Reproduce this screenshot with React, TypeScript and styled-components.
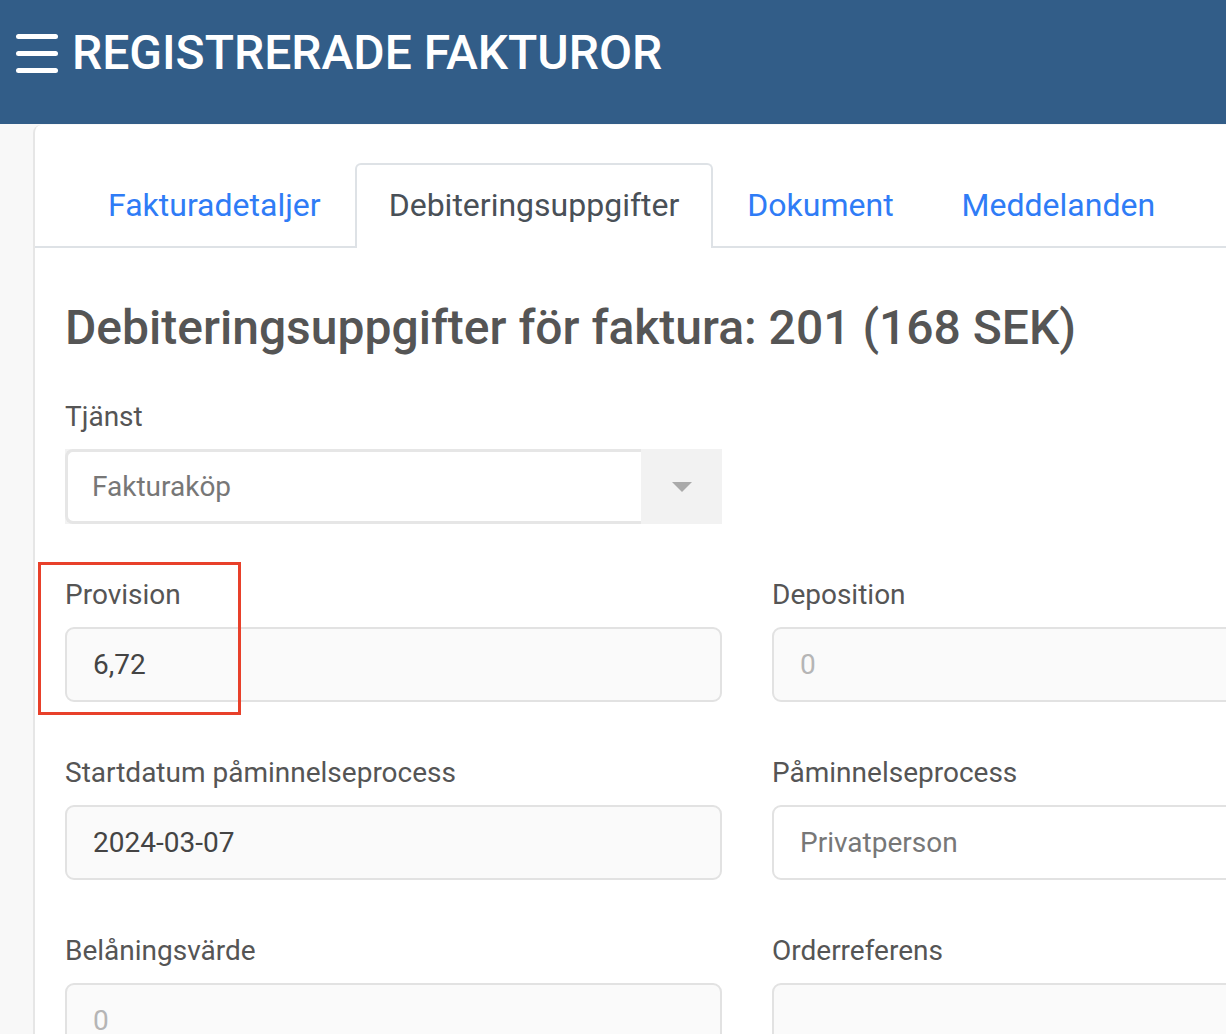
import React from "react";
import styled, { createGlobalStyle } from "styled-components";

const GlobalStyle = createGlobalStyle`
  html, body {
    margin: 0;
    padding: 0;
    background: #f8f8f8;
    font-family: Roboto, "Liberation Sans", Arial, sans-serif;
    overflow: hidden;
  }
`;

const Header = styled.header`
  height: 124px;
  box-sizing: border-box;
  background: #325d88;
  display: flex;
  align-items: flex-start;
  padding: 26px 0 0 16px;
  gap: 14px;
  h1 {
    margin: 0;
    color: #fff;
    font-size: 48px;
    font-weight: 500;
    line-height: 54px;
  }
`;

const Burger = styled.span`
  display: flex;
  flex-direction: column;
  gap: 12px;
  margin-top: 8px;
  span {
    display: block;
    width: 42px;
    height: 5px;
    border-radius: 3px;
    background: #fff;
  }
`;

const Main = styled.main`
  padding-left: 33px;
  padding-top: 1px;
  background: #f8f8f8;
`;

const Card = styled.div`
  background: #fff;
  border-left: 2px solid #e6e6e6;
  border-top-left-radius: 8px;
  min-height: 920px;
  padding-top: 38px;
`;

const TabBar = styled.nav`
  display: flex;
  padding-left: 39px;
  border-bottom: 2px solid #dee2e6;
`;

const Tab = styled.a<{ $active?: boolean }>`
  display: block;
  box-sizing: border-box;
  height: ${(p) => (p.$active ? "85px" : "83px")};
  margin-bottom: ${(p) => (p.$active ? "-2px" : "0")};
  padding: 0 32px;
  line-height: 81px;
  font-size: 32px;
  text-decoration: none;
  color: ${(p) => (p.$active ? "#495057" : "#2f7cf6")};
  border: 2px solid ${(p) => (p.$active ? "#dee2e6" : "transparent")};
  border-bottom: none;
  border-radius: 6px 6px 0 0;
  background: ${(p) => (p.$active ? "#fff" : "transparent")};
`;

const Content = styled.section`
  padding: 0 0 0 30px;
  color: #555;
`;

const Title = styled.h2`
  margin: 52px 0 45px;
  font-size: 48px;
  font-weight: 500;
  line-height: 56px;
  color: #555;
`;

const Grid = styled.div`
  display: grid;
  grid-template-columns: 657px 657px;
  column-gap: 50px;
  row-gap: 55px;
`;

const Field = styled.div`
  position: relative;
`;

const Label = styled.label`
  display: block;
  font-size: 28px;
  line-height: 32px;
  margin-bottom: 16px;
  color: #555;
`;

const Input = styled.div<{ $muted?: boolean; $white?: boolean }>`
  height: 75px;
  box-sizing: border-box;
  border: 2px solid #e2e2e2;
  border-radius: 9px;
  background: ${(p) => (p.$white ? "#fff" : "#fafafa")};
  padding: 0 26px;
  display: flex;
  align-items: center;
  font-size: 28px;
  color: ${(p) => (p.$muted ? "#b5b5b5" : p.$white ? "#777" : "#444")};
`;

const Select = styled.div`
  height: 75px;
  display: flex;
  background: #f2f2f2;
`;

const SelectValue = styled.div`
  flex: 1;
  box-sizing: border-box;
  border: 3px solid #e6e6e6;
  border-right: none;
  border-radius: 8px 0 0 8px;
  background: #fff;
  display: flex;
  align-items: center;
  padding-left: 24px;
  font-size: 28px;
  color: #777;
`;

const Caret = styled.div`
  width: 81px;
  display: flex;
  align-items: center;
  justify-content: center;
  &::after {
    content: "";
    border-left: 10px solid transparent;
    border-right: 10px solid transparent;
    border-top: 10px solid #aaa;
  }
`;

const Highlight = styled.div`
  position: absolute;
  left: -27px;
  top: -17px;
  width: 203px;
  height: 153px;
  box-sizing: border-box;
  border: 3px solid #e8402a;
  pointer-events: none;
`;

const App: React.FC = () => {
  return (
    <>
      <GlobalStyle />
      <Header>
        <Burger>
          <span />
          <span />
          <span />
        </Burger>
        <h1>REGISTRERADE FAKTUROR</h1>
      </Header>
      <Main>
        <Card>
          <TabBar>
            <Tab href="#">Fakturadetaljer</Tab>
            <Tab href="#" $active>
              Debiteringsuppgifter
            </Tab>
            <Tab href="#">Dokument</Tab>
            <Tab href="#">Meddelanden</Tab>
          </TabBar>
          <Content>
            <Title>Debiteringsuppgifter för faktura: 201 (168 SEK)</Title>
            <Grid>
              <Field>
                <Label>Tjänst</Label>
                <Select>
                  <SelectValue>Fakturaköp</SelectValue>
                  <Caret />
                </Select>
              </Field>
              <div />
              <Field>
                <Label>Provision</Label>
                <Input>6,72</Input>
                <Highlight />
              </Field>
              <Field>
                <Label>Deposition</Label>
                <Input $muted>0</Input>
              </Field>
              <Field>
                <Label>Startdatum påminnelseprocess</Label>
                <Input>2024-03-07</Input>
              </Field>
              <Field>
                <Label>Påminnelseprocess</Label>
                <Input $white>Privatperson</Input>
              </Field>
              <Field>
                <Label>Belåningsvärde</Label>
                <Input $muted>0</Input>
              </Field>
              <Field>
                <Label>Orderreferens</Label>
                <Input />
              </Field>
            </Grid>
          </Content>
        </Card>
      </Main>
    </>
  );
};

export default App;
